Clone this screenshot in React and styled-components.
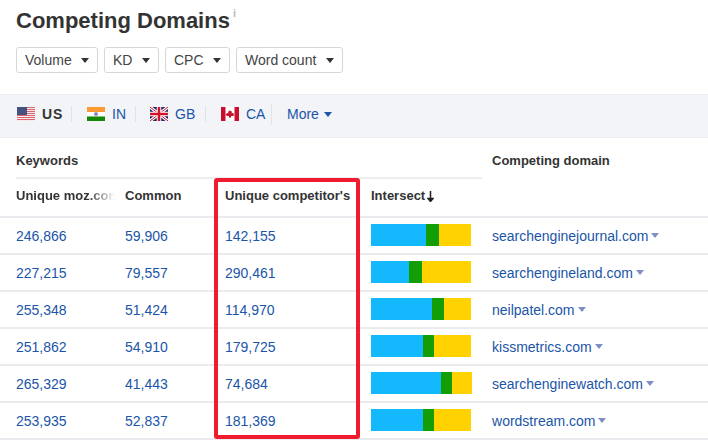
import React from 'react';
import styled, { createGlobalStyle } from 'styled-components';

const Global = createGlobalStyle`
  html, body { margin: 0; padding: 0; background: #fff; }
  body { font-family: "Liberation Sans", Arial, sans-serif; width: 708px; height: 445px; overflow: hidden; color: #333; }
`;
const Page = styled.div`position: relative; width: 708px; height: 445px; overflow: hidden;`;
const Head = styled.header`padding: 8px 16px 0; height: 86px; box-sizing: border-box;`;
const Title = styled.h1`
  margin: 0; font-size: 22px; line-height: 25px; font-weight: 700; color: #333; display: flex;
`;
const Info = styled.span`font-size: 11px; font-weight: 700; color: #bbb; line-height: 11px; margin-left: 3px;`;
const Filters = styled.div`display: flex; gap: 6px; margin-top: 14px;`;
const Filter = styled.button`
  display: flex; align-items: center; justify-content: space-between; height: 26px; box-sizing: border-box;
  width: ${p => p.$w}px; padding: 0 8px; background: #fff; border: 1px solid #d5d7da; border-radius: 3px;
  font: 14px "Liberation Sans", Arial, sans-serif; color: #444;
`;
const Caret = styled.i`
  width: 0; height: 0; border-left: 4px solid transparent; border-right: 4px solid transparent;
  border-top: 5px solid ${p => p.$c || '#333'}; display: inline-block;
`;
const Strip = styled.nav`
  display: flex; align-items: center; height: 44px; margin-top: 8px; box-sizing: border-box; padding: 0 0 4px 17px;
  background: #f3f4f7; border-top: 1px solid #eceef1; border-bottom: 1px solid #eceef1; font-size: 14px;
`;
const Country = styled.a`
  display: flex; align-items: center; gap: 7px; color: ${p => p.$active ? '#333' : '#1a55a8'};
  font-weight: ${p => p.$active ? 700 : 400}; letter-spacing: ${p => p.$active ? '.8px' : 0};
  width: ${p => p.$w}px;
`;
const Sep = styled.span`width: 1px; height: ${p => p.$h || 16}px; background: #e0e2e5; margin-right: ${p => p.$m}px;`;
const More = styled.a`display: flex; align-items: center; gap: 5px; color: #1a55a8; font-size: 14px;`;
const Table = styled.table`
  border-collapse: collapse; table-layout: fixed; width: 708px; font-size: 14px;
`;
const Col = styled.col`width: ${p => p.$w}px;`;
const Group = styled.th`
  position: relative; height: 40px; padding: 4px 0 0 ${p => p.$pad || 0}px; text-align: left; font-size: 13px; font-weight: 700; color: #333; box-sizing: border-box;
  vertical-align: middle;
  ${p => p.$line && `&::after { content: ''; position: absolute; left: 16px; right: 0; bottom: -1px; height: 2px; background: #eceef0; }`}
`;
const HeadCell = styled.th`
  height: 39px; box-sizing: border-box; padding: 0 0 3px ${p => p.$pad || 0}px; text-align: left; font-size: 13px; font-weight: 700; color: #333;
  border-bottom: 2px solid #e9ebee; white-space: nowrap;
`;
const Fade = styled.span`
  display: block; width: 99px; overflow: hidden; white-space: nowrap;
  -webkit-mask-image: linear-gradient(to right, #000 72%, transparent 100%);
  mask-image: linear-gradient(to right, #000 72%, transparent 100%);
`;
const Cell = styled.td`
  height: 37px; box-sizing: border-box; padding: 0 0 0 ${p => p.$pad || 0}px; border-bottom: 2px solid #e9ebee; color: #1a55a8; white-space: nowrap;
`;
const Domain = styled.span`display: inline-flex; align-items: center; gap: 3px;`;
const Bar = styled.div`display: flex; height: 22px; margin-top: -1px; width: ${p => p.$w}px;`;
const Seg = styled.span`display: block; background: ${p => p.$c};`;
const Highlight = styled.div`
  position: absolute; left: 214px; top: 178px; width: 146px; height: 261px; box-sizing: border-box;
  border: 4.5px solid #ee1c2e; border-radius: 3px; pointer-events: none;
`;

const Us = () => (
  <svg width="18" height="14" viewBox="0 0 18 14">
    <rect width="18" height="14" fill="#f8eaea"/>
    {[0, 2, 4, 6, 8, 10, 12].map(y => <rect key={y} y={y} width="18" height="1" fill="#d9666e"/>)}
    <rect width="10" height="8" fill="#46527f"/>
  </svg>
);
const In = () => (
  <svg width="18" height="14" viewBox="0 0 18 14">
    <rect width="18" height="5" fill="#ff9933"/><rect y="5" width="18" height="4.500" fill="#fff"/><rect y="9.500" width="18" height="4.500" fill="#138808"/>
    <circle cx="9" cy="7" r="2" fill="#8c8cc4"/>
  </svg>
);
const Gb = () => (
  <svg width="18" height="14" viewBox="0 0 18 14">
    <rect width="18" height="14" fill="#23246a"/>
    <path d="M0 0L18 14M18 0L0 14" stroke="#fff" strokeWidth="3"/>
    <path d="M0 0L18 14M18 0L0 14" stroke="#cf142b" strokeWidth="1"/>
    <path d="M9 0V14M0 7H18" stroke="#fff" strokeWidth="4.500"/>
    <path d="M9 0V14M0 7H18" stroke="#cf142b" strokeWidth="2.500"/>
  </svg>
);
const Ca = () => (
  <svg width="18" height="14" viewBox="0 0 18 14">
    <rect width="18" height="14" fill="#fff"/><rect width="4.500" height="14" fill="#c8102e"/><rect x="13.500" width="4.500" height="14" fill="#c8102e"/>
    <path d="M9 3l1 1.600 1-.4-.4 2.200 1.400-.6.4.9 1 .1-1 1.600.3.700L10 9l.2 1.400H9.300V11h-.6v-.6h-.9L8 9l-2.700.1.300-.7-1-1.600 1-.1.400-.9 1.400.6L7 4.200l1 .4z" fill="#c8102e"/>
  </svg>
);
const ArrowDown = () => (
  <svg width="7" height="11" viewBox="0 0 7 11" style={{ marginLeft: 2, verticalAlign: -2 }}>
    <path d="M3.500 0V10M1 7.500L3.500 10.500L6 7.500Z" stroke="#222" strokeWidth="1.500" fill="#222"/>
  </svg>
);

const rows = [
  ['246,866', '59,906', '142,155', [55, 13, 32], 'searchenginejournal.com'],
  ['227,215', '79,557', '290,461', [38, 13, 49], 'searchengineland.com'],
  ['255,348', '51,424', '114,970', [61, 12, 27], 'neilpatel.com'],
  ['251,862', '54,910', '179,725', [52, 11, 37], 'kissmetrics.com'],
  ['265,329', '41,443', '74,684', [70, 11, 20], 'searchenginewatch.com'],
  ['253,935', '52,837', '181,369', [52, 11, 37], 'wordstream.com'],
];
const colors = ['#14b9fd', '#139e05', '#ffd200'];

export default function App() {
  return (
    <Page>
      <Global />
      <Head>
        <Title>Competing Domains<Info>i</Info></Title>
        <Filters>
          <Filter $w={82}>Volume <Caret /></Filter>
          <Filter $w={55}>KD <Caret /></Filter>
          <Filter $w={65}>CPC <Caret /></Filter>
          <Filter $w={107}>Word count <Caret /></Filter>
        </Filters>
      </Head>
      <Strip>
        <Country $active $w={54}><Us />US</Country><Sep $m={15} />
        <Country $w={48}><In />IN</Country><Sep $m={14} />
        <Country $w={55}><Gb />GB</Country><Sep $m={15} />
        <Country $w={50}><Ca />CA</Country><Sep $h={21} $m={15} />
        <More>More <Caret $c="#1a55a8" /></More>
      </Strip>
      <Table>
        <colgroup>
          <Col $w={109} /><Col $w={100} /><Col $w={146} /><Col $w={127} /><Col $w={226} />
        </colgroup>
        <thead>
          <tr>
            <Group colSpan={4} $pad={16} $line>Keywords</Group>
            <Group $pad={10}>Competing domain</Group>
          </tr>
          <tr>
            <HeadCell $pad={16}><Fade>Unique moz.com</Fade></HeadCell>
            <HeadCell $pad={16}>Common</HeadCell>
            <HeadCell $pad={16}>Unique competitor's</HeadCell>
            <HeadCell $pad={16}>Intersect<ArrowDown /></HeadCell>
            <HeadCell />
          </tr>
        </thead>
        <tbody>
          {rows.map(r => (
            <tr key={r[4]}>
              <Cell $pad={16}>{r[0]}</Cell>
              <Cell $pad={16}>{r[1]}</Cell>
              <Cell $pad={16}>{r[2]}</Cell>
              <Cell $pad={16}>
                <Bar $w={r[3][0] + r[3][1] + r[3][2]}>
                  {r[3].map((w, i) => <Seg key={i} $c={colors[i]} style={{ width: w }} />)}
                </Bar>
              </Cell>
              <Cell $pad={10}><Domain>{r[4]}<Caret $c="#7f8fc4" /></Domain></Cell>
            </tr>
          ))}
        </tbody>
      </Table>
      <Highlight />
    </Page>
  );
}
